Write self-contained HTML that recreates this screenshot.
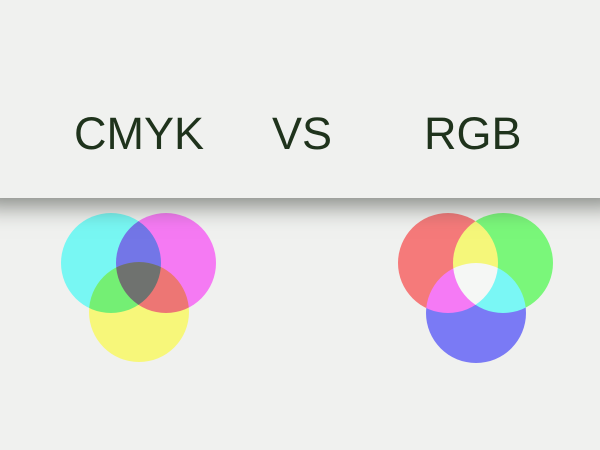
<!DOCTYPE html>
<html><head><style>
html,body{margin:0;padding:0}
body{width:600px;height:450px;background:#f0f1ef;position:relative;overflow:hidden;font-family:"Liberation Sans",sans-serif}
.hdr{position:absolute;left:-20px;top:0;width:640px;height:198px;background:#f0f1ef;box-shadow:0 8px 22px rgba(60,65,58,0.6);z-index:2}
.t{position:absolute;top:111px;font-size:45px;color:#1f331c;line-height:45px;z-index:3}
svg{position:absolute;left:0;top:0;z-index:1}
</style></head><body>
<div class="hdr"></div>
<div class="t" style="left:74px">CMYK</div>
<div class="t" style="left:272px">VS</div>
<div class="t" style="left:424px">RGB</div>
<svg width="600" height="450">
<g style="isolation:isolate">
<circle cx="111" cy="263" r="50" fill="#78f7f3" style="mix-blend-mode:multiply"/>
<circle cx="166" cy="263" r="50" fill="#f57af3" style="mix-blend-mode:multiply"/>
<circle cx="139" cy="312" r="50" fill="#f7f77a" style="mix-blend-mode:multiply"/>
</g>
<g style="isolation:isolate">
<circle cx="448" cy="263" r="50" fill="#f57a7a" style="mix-blend-mode:lighten"/>
<circle cx="503" cy="263" r="50" fill="#7af77a" style="mix-blend-mode:lighten"/>
<circle cx="476" cy="313" r="50" fill="#7a7af5" style="mix-blend-mode:lighten"/>
</g>
</svg>
</body></html>
